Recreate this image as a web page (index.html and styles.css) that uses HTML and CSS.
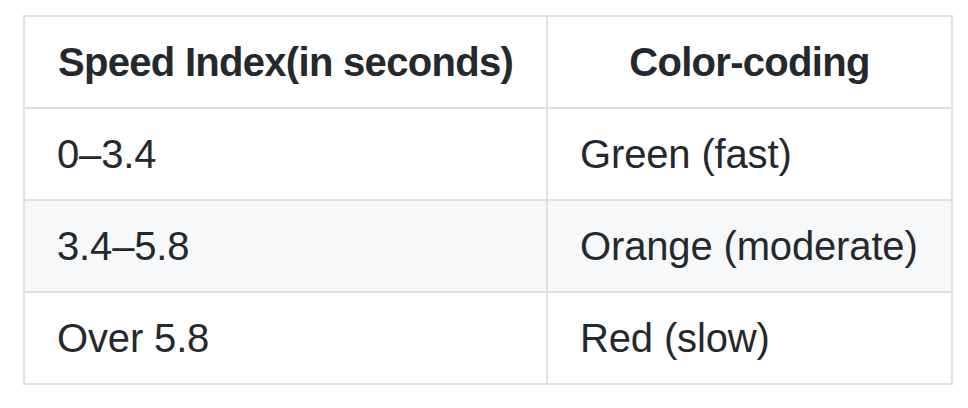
FILE: index.html
```html
<!DOCTYPE html>
<html>
<head>
<meta charset="utf-8">
<link rel="stylesheet" href="styles.css">
</head>
<body>
<div class="page">
<table class="speed-table">
  <colgroup>
    <col class="col-range">
    <col class="col-color">
  </colgroup>
  <thead>
    <tr><th>Speed Index(in seconds)</th><th>Color-coding</th></tr>
  </thead>
  <tbody>
    <tr><td>0–3.4</td><td>Green (fast)</td></tr>
    <tr class="alt"><td>3.4–5.8</td><td>Orange (moderate)</td></tr>
    <tr><td>Over 5.8</td><td>Red (slow)</td></tr>
  </tbody>
</table>
</div>
</body>
</html>
```
FILE: styles.css
```css
html, body {
  margin: 0;
  padding: 0;
  background: #ffffff;
}
.page {
  padding: 15px 0 0 23px;
}
.speed-table {
  border-collapse: collapse;
  table-layout: fixed;
  width: 928px;
  font-family: "Liberation Sans", Arial, sans-serif;
  font-size: 40px;
  color: #24292e;
}
.col-range { width: 523px; }
.col-color { width: 405px; }
.speed-table th,
.speed-table td {
  border: 2px solid #dfe2e5;
  padding: 15px 32px;
  line-height: 60px;
  height: 60px;
  white-space: nowrap;
}
.speed-table th {
  font-weight: 700;
  text-align: center;
  letter-spacing: -0.7px;
}
.speed-table td {
  text-align: left;
  letter-spacing: -0.15px;
}
.speed-table tr.alt {
  background: #f6f8fa;
}
```
